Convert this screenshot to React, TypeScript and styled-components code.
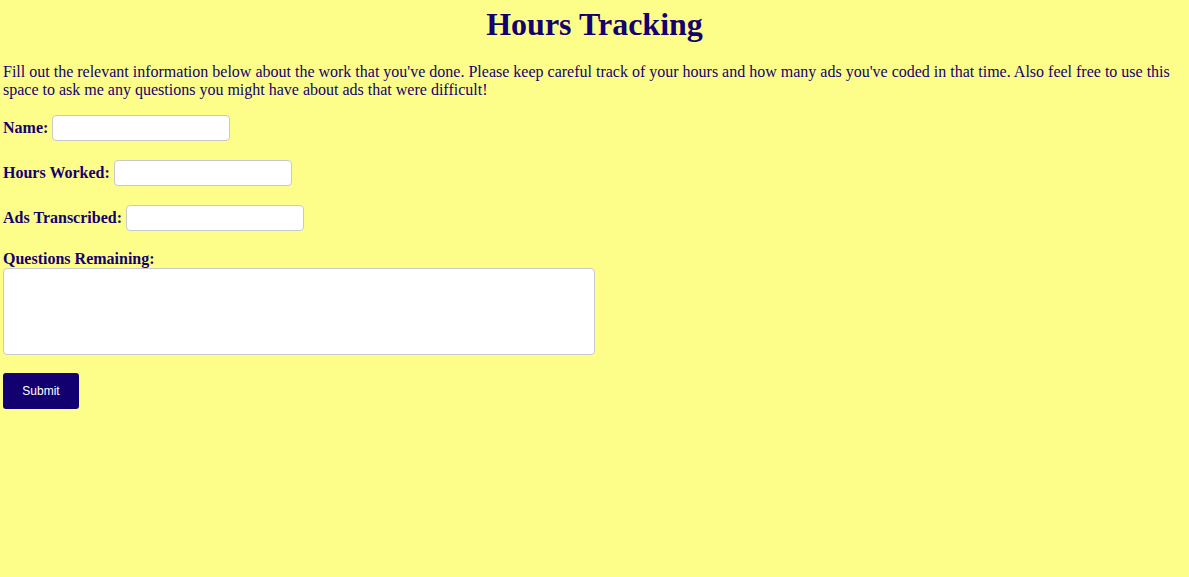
import styled, { createGlobalStyle } from "styled-components";

const GlobalStyle = createGlobalStyle`
  html, body {
    margin: 0;
    padding: 0;
    background: #fdfe8a;
  }
  body {
    font-family: "Liberation Serif", "Times New Roman", serif;
    color: #150070;
  }
`;

const Page = styled.div`
  padding: 6px 3px 0;
  min-height: 571px;
`;

const Title = styled.h1`
  font-size: 32px;
  font-weight: bold;
  text-align: center;
  margin: 0;
  line-height: 37px;
`;

const Intro = styled.p`
  font-size: 16px;
  line-height: 18.4px;
  margin: 20px 0 0;
`;

const Form = styled.form`
  display: flex;
  flex-direction: column;
  align-items: flex-start;
  margin-top: 15px;
`;

const Row = styled.div`
  display: flex;
  align-items: center;
  gap: 4px;
  height: 26px;
  margin-bottom: 19px;
`;

const Label = styled.label`
  font-size: 16px;
  font-weight: bold;
  line-height: 18.4px;
`;

const TextInput = styled.input`
  box-sizing: border-box;
  width: 178px;
  height: 26px;
  border: 1px solid #c9c9c9;
  border-radius: 4px;
  background: #fff;
  padding: 0 6px;
  outline: none;
`;

const QuestionBlock = styled.div`
  display: flex;
  flex-direction: column;
  margin-top: 0;
`;

const TextArea = styled.textarea`
  box-sizing: border-box;
  width: 592px;
  height: 87px;
  margin: 0;
  border: 1px solid #c9c9c9;
  border-radius: 4px;
  background: #fff;
  resize: none;
  outline: none;
`;

const SubmitButton = styled.button`
  margin-top: 18px;
  width: 76px;
  height: 36px;
  border: none;
  border-radius: 3px;
  background: #130070;
  color: #fff;
  font-family: "Liberation Sans", Arial, sans-serif;
  font-size: 12px;
  cursor: pointer;
`;

const fields = [
  { id: "name", label: "Name:" },
  { id: "hours", label: "Hours Worked:" },
  { id: "ads", label: "Ads Transcribed:" },
];

export default function App() {
  return (
    <Page>
      <GlobalStyle />
      <Title>Hours Tracking</Title>
      <Intro>
        Fill out the relevant information below about the work that you've
        done. Please keep careful track of your hours and how many ads you've
        coded in that time. Also feel free to use this space to ask me any
        questions you might have about ads that were difficult!
      </Intro>
      <Form onSubmit={(e) => e.preventDefault()}>
        {fields.map((f) => (
          <Row key={f.id}>
            <Label htmlFor={f.id}>{f.label}</Label>
            <TextInput id={f.id} type="text" />
          </Row>
        ))}
        <QuestionBlock>
          <Label htmlFor="questions">Questions Remaining:</Label>
          <TextArea id="questions" />
        </QuestionBlock>
        <SubmitButton type="submit">Submit</SubmitButton>
      </Form>
    </Page>
  );
}
